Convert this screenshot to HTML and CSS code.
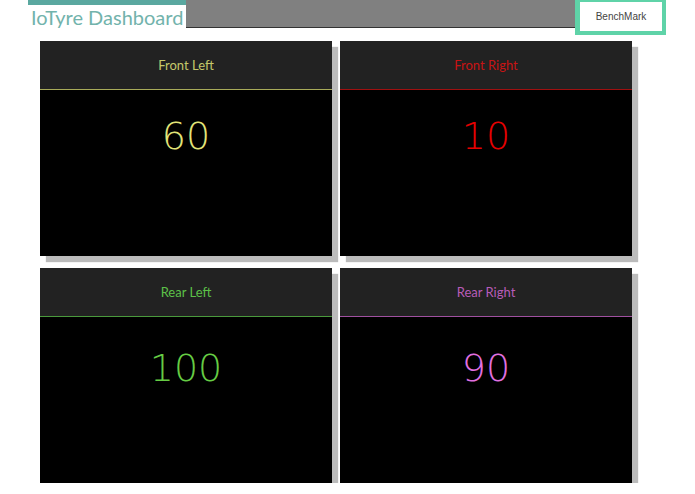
FILE: index.html
```html
<!DOCTYPE html>
<html lang="en">
<head>
    <meta charset="UTF-8">
    <meta name="viewport" content="width=device-width, initial-scale=1.0">
    <title>IoTyre Dashboard</title>
    <link rel="stylesheet" href="styles.css">
</head>
<body>
    <div class="topbar">
        <div class="brand">IoTyre Dashboard</div>
        <div class="filler"></div>
        <button class="bench">BenchMark</button>
    </div>

    <div class="tyres">
        <div class="tyre fl">
            <div class="tyre-head">Front Left</div>
            <div class="tyre-value">60</div>
        </div>
        <div class="tyre fr">
            <div class="tyre-head">Front Right</div>
            <div class="tyre-value">10</div>
        </div>
        <div class="tyre rl">
            <div class="tyre-head">Rear Left</div>
            <div class="tyre-value">100</div>
        </div>
        <div class="tyre rr">
            <div class="tyre-head">Rear Right</div>
            <div class="tyre-value">90</div>
        </div>
    </div>
</body>
</html>
```

FILE: styles.css
```css
body {
    margin: 0;
    font-family: "Lato", "Open Sans", sans-serif;
    background: #fff;
}

.topbar {
    display: flex;
    align-items: flex-start;
    margin-left: 28px;
    height: 35px;
}

.brand {
    width: 155px;
    height: 23px;
    border-top: 5px solid #5aa8a0;
    padding-left: 3px;
    box-sizing: content-box;
    font-size: 20px;
    line-height: 25px;
    color: #72b3ac;
    white-space: nowrap;
}

.filler {
    width: 389px;
    height: 28px;
    background: #808080;
    border-bottom: 1px solid #333;
    box-sizing: border-box;
}

.bench {
    width: 91px;
    height: 35px;
    margin: 0;
    padding: 0;
    background: #fff;
    border: 4px solid #5fd3a8;
    border-top-width: 2px;
    border-left-width: 5px;
    font-family: "Liberation Sans", Arial, sans-serif;
    font-size: 10px;
    color: #444;
    cursor: pointer;
}

.tyres {
    display: grid;
    grid-template-columns: 292px 292px;
    column-gap: 8px;
    row-gap: 12px;
    margin: 6px 0 0 40px;
}

.tyre {
    height: 215px;
    background: #000;
    box-shadow: 6px 6px 1px #bbb;
}

.tyre-head {
    height: 48px;
    background: #222;
    border-bottom: 1px solid;
    text-align: center;
    font-size: 13px;
    line-height: 48px;
}

.tyre-value {
    padding-top: 24px;
    text-align: center;
    font-family: "DejaVu Sans", sans-serif;
    font-weight: 200;
    font-size: 38px;
}

.rl .tyre-value,
.rr .tyre-value {
    padding-top: 29px;
}

.fl .tyre-head { color: #c5c86a; border-color: #a8ab5a; }
.fl .tyre-value { color: #e2e478; }
.fr .tyre-head { color: #c81414; border-color: #a01010; }
.fr .tyre-value { color: #e60000; }
.rl .tyre-head { color: #5cc048; border-color: #4a9a3c; }
.rl .tyre-value { color: #66cc44; }
.rr .tyre-head { color: #b85cb8; border-color: #a050a0; }
.rr .tyre-value { color: #e070e0; }
```
